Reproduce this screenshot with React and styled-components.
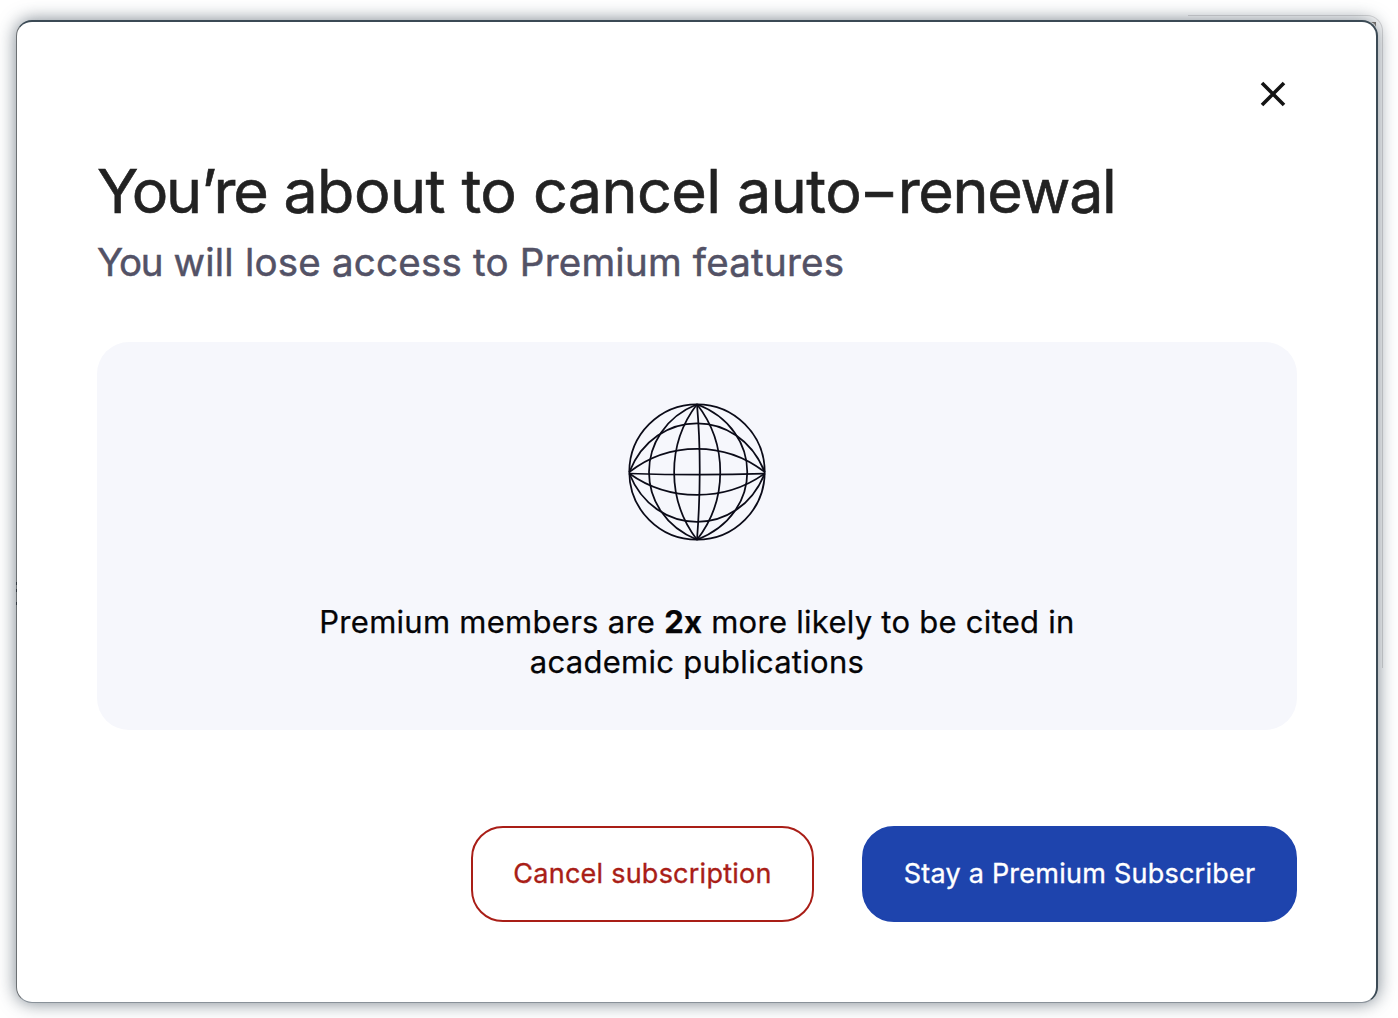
import React from 'react'
import styled, { createGlobalStyle } from 'styled-components'

const App = () => (
  <>
    <GlobalStyle />
    <Page>
      <Modal>
        <Header>
          <CloseButton aria-label='Close'>
            <svg width='26' height='26' viewBox='0 0 26 26' fill='none' stroke='#141414' strokeWidth='3.6'>
              <path d='M2 2L24 24M24 2L2 24' />
            </svg>
          </CloseButton>
        </Header>
        <Title>
          <Tight $by='-2.1px'>You’re</Tight> about to cancel auto<Hyphen>-</Hyphen><Tight $by='-1.3px'>renewal</Tight>
        </Title>
        <Subtitle>
          <Tight $by='-1.2px'>You</Tight> will lose access to Premium features
        </Subtitle>
        <Card>
          <Globe />
          <Benefit>
            Premium members are <strong>2x</strong> more likely to be cited in
            <br />
            academic publications
          </Benefit>
        </Card>
        <Actions>
          <Button $width='343px'>Cancel subscription</Button>
          <Button $primary $width='435px'>Stay a Premium Subscriber</Button>
        </Actions>
      </Modal>
      <WindowEdge />
      <EdgeMarks />
    </Page>
  </>
)

const Globe = () => (
  <svg width='140' height='140' viewBox='0 0 140 140' fill='none' stroke='#0b0b18' strokeWidth='1.75'>
    <circle cx='70' cy='70' r='67.7' />
    <path d='M70 2.3C6 28 6 112 70 137.7' />
    <path d='M70 2.3C39.5 42 39.5 98 70 137.7' />
    <path d='M70 2.3C74 48 73 98 70 137.7' />
    <path d='M70 2.3C101 42 101 98 70 137.7' />
    <path d='M70 2.3C137 28 137 112 70 137.7' />
    <path d='M2.3 70C28 5 112 5 137.7 70' />
    <path d='M2.3 70C42 39 98 39 137.7 70' />
    <path d='M2.3 71.5C48 73 98 73 137.7 71.5' />
    <path d='M2.3 71.5C42 100 98 100 137.7 71.5' />
    <path d='M2.3 71.5C28 136 112 136 137.7 71.5' />
  </svg>
)

export default App

const GlobalStyle = createGlobalStyle`
  * {
    box-sizing: border-box;
  }
  body {
    margin: 0;
    background: #fff;
    font-family: Inter, 'Liberation Sans', sans-serif;
  }
`

const Page = styled.div`
  position: relative;
  height: 1018px;
  padding: 20px 20px 15px 16px;
  overflow: hidden;
`

const Modal = styled.div`
  display: flex;
  flex-direction: column;
  height: 983px;
  padding: 0 79px 80px 80px;
  background: #fff;
  border: solid #3b4a55;
  border-width: 2px 2px 1px 1px;
  border-color: #3b4a55 #3b4a55 #899199 #6c7073;
  border-radius: 16px;
  box-shadow: 0 0 18px rgba(50, 66, 80, .65);
`

/* sliver of the window behind, showing through the shadow */
const WindowEdge = styled.div`
  position: absolute;
  top: 15px;
  right: 15px;
  width: 195px;
  height: 653px;
  border: solid rgba(70, 70, 75, .2);
  border-width: 1px 1px 0 0;
  border-top-right-radius: 16px;

  &::before {
    content: '';
    position: absolute;
    top: 6px;
    right: 6px;
    width: 5px;
    height: 5px;
    background: #6d6a68;
    clip-path: polygon(0 0, 100% 0, 100% 100%, 65% 35%);
  }
`

const EdgeMarks = styled.div`
  position: absolute;
  top: 582px;
  left: 16px;
  width: 1px;
  height: 3px;
  background: #30363d;
  box-shadow: 0 7px #30363d, 0 20px #30363d;
`

const Header = styled.div`
  display: flex;
  justify-content: flex-end;
  height: 129px;
  padding: 59px 11px 0 0;
`

const CloseButton = styled.button`
  width: 26px;
  height: 26px;
  padding: 0;
  border: none;
  background: none;
`

const Title = styled.h1`
  margin: 0;
  height: 80px;
  line-height: 80px;
  font-size: 61px;
  font-weight: 400;
  letter-spacing: -.55px;
  white-space: nowrap;
  color: #222;
  -webkit-text-stroke: .6px #222;
`

const Tight = styled.span`
  letter-spacing: ${props => props.$by};
`

const Hyphen = styled.span`
  display: inline-block;
  margin: 0 5px 0 4px;
  transform: scaleX(1.4);
`

const Subtitle = styled.h2`
  margin: -1px 0 0;
  height: 64px;
  line-height: 64px;
  font-size: 38.5px;
  font-weight: 400;
  letter-spacing: .22px;
  white-space: nowrap;
  color: #535266;
  -webkit-text-stroke: .5px #535266;
`

const Card = styled.div`
  display: flex;
  flex-direction: column;
  align-items: center;
  height: 388px;
  margin-top: 48px;
  padding-top: 60px;
  background: #f6f7fc;
  border-radius: 32px;
`

const Benefit = styled.p`
  margin: 60px 0 0;
  line-height: 40px;
  font-size: 31px;
  letter-spacing: .27px;
  text-align: center;
  white-space: nowrap;
  color: #050507;
  -webkit-text-stroke: .25px #050507;
`

const Actions = styled.div`
  display: flex;
  justify-content: flex-end;
  gap: 48px;
  margin-top: 96px;
`

const Button = styled.button`
  width: ${props => props.$width};
  height: 96px;
  padding: 0 0 2px;
  border: 2px solid ${props => (props.$primary ? '#1e44ad' : '#a91e17')};
  border-radius: 32px;
  background: ${props => (props.$primary ? '#1e44ad' : '#fff')};
  color: ${props => (props.$primary ? '#fff' : '#a91e17')};
  font-family: inherit;
  font-size: 27px;
  letter-spacing: .24px;
  -webkit-text-stroke: .35px currentColor;
`
